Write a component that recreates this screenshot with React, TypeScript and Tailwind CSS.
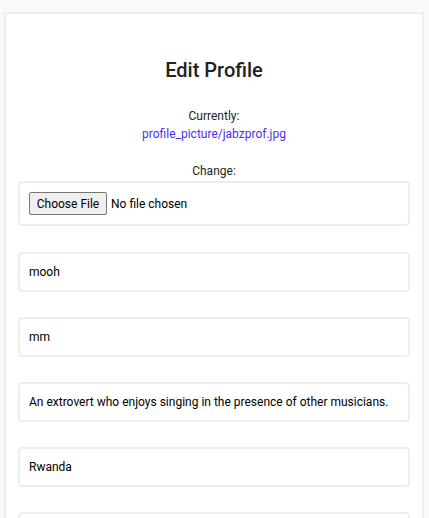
import React from "react";

const fields = [
  "mooh",
  "mm",
  "An extrovert who enjoys singing in the presence of other musicians.",
  "Rwanda",
  "",
];

export default function App() {
  return (
    <div
      className="min-h-[518px] bg-[#f9f9f9] pt-[12px] pl-[4px] overflow-hidden h-[518px]"
      style={{ fontFamily: "Roboto, 'Liberation Sans', sans-serif" }}
    >
      <div className="w-[420px] border-2 border-[#eeeeee] bg-white px-[12px] pt-[42px] pb-[20px]">
        <h2 className="text-center text-[20px] leading-[28px] font-medium text-[#222]">
          Edit Profile
        </h2>
        <div className="mt-[23px] flex flex-col items-center text-[12px] leading-[18px] text-[#222]">
          <span>Currently:</span>
          <a className="text-[#4b2ef8]" href="#">
            profile_picture/jabzprof.jpg
          </a>
          <span className="mt-[19px]">Change:</span>
        </div>
        <div className="mt-[1px] flex items-center gap-[4px] rounded-[4px] border-2 border-[#eeeeee] p-[9px] text-[12px]">
          <span className="flex h-[23px] w-[78px] items-center justify-center rounded-[2px] border border-[#767676] bg-[#efefef] text-[12px] text-black">
            Choose File
          </span>
          <span className="text-black">No file chosen</span>
        </div>
        <div className="mt-[26px] flex flex-col gap-[25px]">
          {fields.map((f, i) => (
            <div
              key={i}
              className="h-[40px] rounded-[4px] border-2 border-[#eeeeee] px-[9px] py-[9px] text-[12px] leading-[18px] text-black"
            >
              {f}
            </div>
          ))}
        </div>
      </div>
    </div>
  );
}
